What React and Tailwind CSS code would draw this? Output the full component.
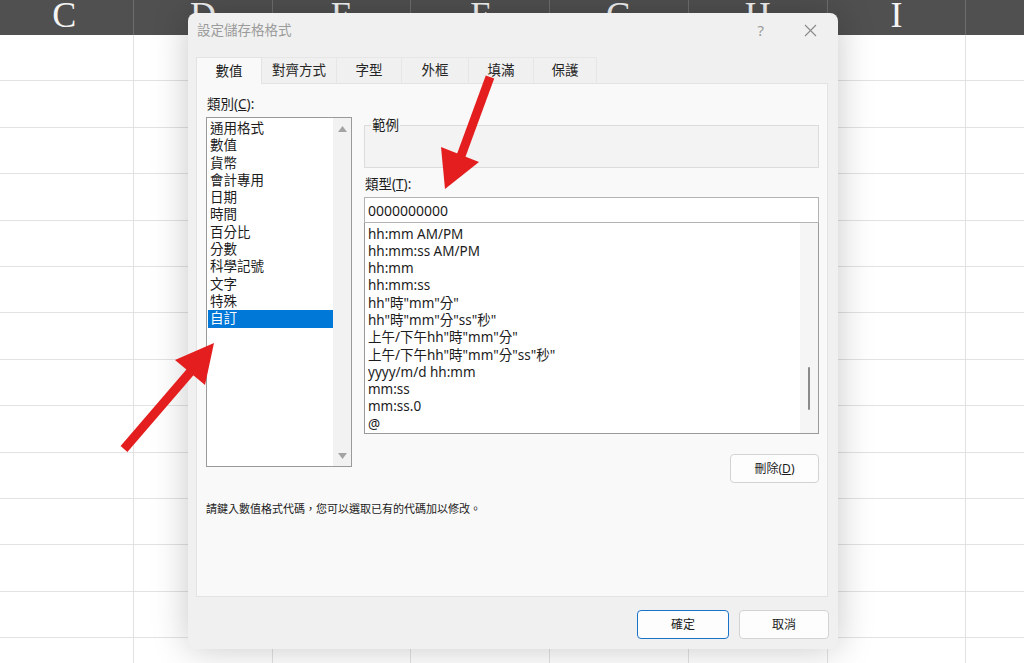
import React from "react";

const COLS = ["C", "D", "E", "F", "G", "H", "I", "J"];
const ROWS = Array.from({ length: 14 });

const CATS = ["通用格式", "數值", "貨幣", "會計專用", "日期", "時間", "百分比", "分數", "科學記號", "文字", "特殊", "自訂"];
const TYPES = [
  "hh:mm AM/PM",
  "hh:mm:ss AM/PM",
  "hh:mm",
  "hh:mm:ss",
  'hh"時"mm"分"',
  'hh"時"mm"分"ss"秒"',
  '上午/下午hh"時"mm"分"',
  '上午/下午hh"時"mm"分"ss"秒"',
  "yyyy/m/d hh:mm",
  "mm:ss",
  "mm:ss.0",
  "@",
];
const TABS = [
  { t: "數值", w: "w-[66px]", sel: true },
  { t: "對齊方式", w: "w-[75px]" },
  { t: "字型", w: "w-[65px]" },
  { t: "外框", w: "w-[67px]" },
  { t: "填滿", w: "w-[65px]" },
  { t: "保護", w: "w-[63px]" },
];

const UI = { fontFamily: '"Noto Sans", "Noto Sans CJK TC", sans-serif' };

export default function App() {
  return (
    <div className="relative w-[1024px] h-[663px] overflow-hidden bg-white" style={UI}>
      {/* Spreadsheet background */}
      <div className="flex flex-col">
        <div className="flex h-[35px] bg-[#505050] -ml-[4.6px]">
          {COLS.map((c) => (
            <div key={c} className="w-[138.7px] shrink-0 h-[35px] flex justify-center items-start border-r border-[#6e6e6e]">
              <span className="-mt-[3px] leading-[36px] text-[36px] text-[#f4f4f4]" style={{ fontFamily: '"Liberation Serif", serif' }}>{c}</span>
            </div>
          ))}
        </div>
        {ROWS.map((_, i) => (
          <div key={i} className="flex h-[46.4px] -ml-[4.6px]">
            {COLS.map((c) => (
              <div key={c} className="w-[138.7px] shrink-0 h-[46.4px] border-r border-b border-[#e2e2e2]" />
            ))}
          </div>
        ))}
      </div>

      {/* Dialog */}
      <div className="absolute left-[188px] top-[13px] w-[650px] h-[636px] rounded-[8px] bg-[#f0f0f0] shadow-[0_0_36px_rgba(0,0,0,0.22)] flex flex-col text-[#1c1c1c]">
        {/* Title */}
        <div className="h-[34px] flex items-center pl-[9px] pr-[21px]">
          <span className="text-[13.5px] leading-[17px] text-[#9b9b9b]">設定儲存格格式</span>
          <span className="ml-auto mr-[40px] text-[15px] text-[#9b9b9b]">?</span>
          <svg width="13" height="13" viewBox="0 0 13 13" className="text-[#8a8a8a]">
            <path d="M1 1 L12 12 M12 1 L1 12" stroke="currentColor" strokeWidth="1.1" />
          </svg>
        </div>

        {/* Tabs */}
        <div className="flex pl-[8px] mt-[10px] h-[26px]">
          {TABS.map((tab) =>
            tab.sel ? (
              <div key={tab.t} className={`${tab.w} relative z-10 h-[27px] -mb-px bg-[#f9f9f9] border border-b-0 border-[#e3e3e3] flex items-center justify-center text-[13.5px]`}>
                {tab.t}
              </div>
            ) : (
              <div key={tab.t} className={`${tab.w} h-[26px] bg-[#f0f0f0] border-t border-r border-[#e6e6e6] flex items-center justify-center text-[13.5px] text-[#262626]`}>
                {tab.t}
              </div>
            )
          )}
        </div>

        {/* Panel */}
        <div className="ml-[8px] w-[632px] h-[514px] bg-[#f9f9f9] border border-[#e3e3e3] flex flex-col">
          <div className="flex items-start pt-[12px] pl-[9px]">
            {/* Left column */}
            <div className="flex flex-col">
              <div className="ml-[1px] text-[13.5px] leading-[17px]">
                類別(<span className="underline">C</span>):
              </div>
              <div className="mt-[4px] w-[146px] h-[350px] bg-white border border-[#9a9a9a] flex">
                <div className="flex-1 pt-[2px] pl-[1px]">
                  {CATS.map((c) => (
                    <div
                      key={c}
                      className={`h-[17.3px] leading-[17.3px] pl-[2px] text-[13.5px] ${c === "自訂" ? "bg-[#0078d7] text-white" : ""}`}
                    >
                      {c}
                    </div>
                  ))}
                </div>
                <div className="w-[18px] bg-[#f2f2f2] flex flex-col items-center justify-between pt-[8px] pb-[7px]">
                  <svg width="9" height="6" viewBox="0 0 9 6"><path d="M4.5 0 L9 6 L0 6 Z" fill="#a3a3a3" /></svg>
                  <svg width="9" height="6" viewBox="0 0 9 6"><path d="M0 0 L9 0 L4.5 6 Z" fill="#a3a3a3" /></svg>
                </div>
              </div>
            </div>

            {/* Right column */}
            <div className="ml-[12px] w-[455px] flex flex-col">
              <fieldset className="mt-[21px] h-[51px] border border-[#dcdcdc] bg-[#f3f3f3]">
                <legend className="ml-[6px] px-[1px] text-[13.5px] leading-[17px]">範例</legend>
              </fieldset>
              <div className="mt-[8px] ml-[1px] text-[13.5px] leading-[17px]">
                類型(<span className="underline">T</span>):
              </div>
              <div className="mt-[4px] h-[26px] bg-white border border-[#b3b3b3] flex items-center pl-[3px] text-[14px]">
                0000000000
              </div>
              <div className="h-[211px] bg-white border border-t-0 border-[#9a9a9a] flex">
                <div className="flex-1 pt-[2.5px] pl-[3px]">
                  {TYPES.map((t) => (
                    <div key={t} className="h-[17.3px] leading-[17.3px] text-[13.5px] whitespace-nowrap">
                      {t}
                    </div>
                  ))}
                </div>
                <div className="w-[18px] bg-[#f5f5f5] flex flex-col items-center pt-[144px]">
                  <div className="w-[2.5px] h-[43px] rounded-full bg-[#8a8a8a]" />
                </div>
              </div>
              <button className="mt-[20px] self-end w-[89px] h-[29px] rounded-[4px] bg-[#fdfdfd] border border-[#d3d3d3] text-[12px] text-[#1c1c1c]">
                刪除(<span className="underline">D</span>)
              </button>
            </div>
          </div>
          <div className="mt-[17px] pl-[9px] text-[11px] leading-[17px] text-[#1c1c1c]">
            請鍵入數值格式代碼，您可以選取已有的代碼加以修改。
          </div>
        </div>

        {/* Bottom buttons */}
        <div className="flex justify-end gap-[10px] pr-[9px] mt-[13px]">
          <button className="w-[92px] h-[29px] rounded-[4px] bg-[#fdfdfd] border border-[#1a73c8] text-[12px] text-[#1c1c1c]">確定</button>
          <button className="w-[90px] h-[29px] rounded-[4px] bg-[#fdfdfd] border border-[#d3d3d3] text-[12px] text-[#1c1c1c]">取消</button>
        </div>
      </div>

      {/* Annotation arrows */}
      <svg className="absolute inset-0 pointer-events-none" width="1024" height="663" viewBox="0 0 1024 663">
        <line x1="490" y1="77" x2="461" y2="156" stroke="#e41e1e" strokeWidth="9" />
        <polygon points="445,189 441,147 479,162" fill="#e41e1e" />
        <line x1="124" y1="449" x2="192" y2="370" stroke="#e41e1e" strokeWidth="9" />
        <polygon points="214,343 175,360 205,385" fill="#e41e1e" />
      </svg>
    </div>
  );
}
